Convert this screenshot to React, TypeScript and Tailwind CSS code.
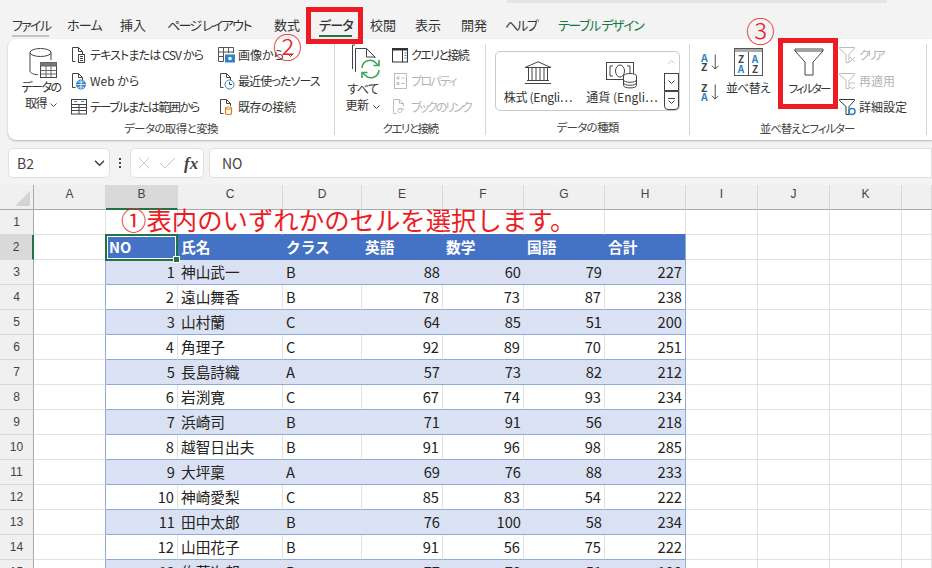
import React from 'react';

const rows = [
  [1, '神山武一', 'B', 88, 60, 79, 227],
  [2, '遠山舞香', 'B', 78, 73, 87, 238],
  [3, '山村蘭', 'C', 64, 85, 51, 200],
  [4, '角理子', 'C', 92, 89, 70, 251],
  [5, '長島詩織', 'A', 57, 73, 82, 212],
  [6, '岩渕寛', 'C', 67, 74, 93, 234],
  [7, '浜崎司', 'B', 71, 91, 56, 218],
  [8, '越智日出夫', 'B', 91, 96, 98, 285],
  [9, '大坪稟', 'A', 69, 76, 88, 233],
  [10, '神崎愛梨', 'C', 85, 83, 54, 222],
  [11, '田中太郎', 'B', 76, 100, 58, 234],
  [12, '山田花子', 'B', 91, 56, 75, 222],
  [13, '佐藤次郎', 'B', 77, 70, 51, 198],
];

const columns = ['A', 'B', 'C', 'D', 'E', 'F', 'G', 'H', 'I', 'J', 'K', ''];
const heads = ['NO', '氏名', 'クラス', '英語', '数学', '国語', '合計'];

const Chevron = ({ className = '' }: { className?: string }) => (
  <svg width="7" height="4" viewBox="0 0 7 4" className={className} fill="none" stroke="#444" strokeWidth="1">
    <path d="M.5.5 3.5 3.5 6.5.5" />
  </svg>
);

const Doc = ({ children, stroke = '#444' }: { children?: React.ReactNode; stroke?: string }) => (
  <svg width="18" height="18" viewBox="0 0 18 18" fill="none" stroke={stroke} strokeWidth="1">
    <path d="M5.5 15.5H2.5V1.5H8.5L12.5 5.5V8M8.5 1.5V5.5H12.5" />
    {children}
  </svg>
);

const DataIcon = () => (
  <svg width="32" height="34" viewBox="0 0 32 34" fill="none" stroke="#444" strokeWidth="1">
    <ellipse cx="11.5" cy="5.5" rx="10.5" ry="4" />
    <path d="M1 5.5V24c0 2 3.5 3.5 8 3.8M22 5.5V13" />
    <rect x="11.5" y="15.5" width="16" height="15" fill="#fff" />
    <rect x="11.5" y="15.5" width="16" height="3.5" fill="#777" stroke="#666" />
    <path d="M11.5 23.5h16M11.5 27h16M17 19v11.5M22 19v11.5" stroke="#666" />
  </svg>
);

const TextIcon = () => (
  <Doc>
    <rect x="8.5" y="8.5" width="6" height="8" fill="#fff" />
    <path d="M10 10.5h3M10 12.5h3M10 14.5h3" />
  </Doc>
);

const WebIcon = () => (
  <Doc>
    <circle cx="11" cy="12.5" r="4.5" fill="#2e83c9" stroke="#2e83c9" />
    <path d="M6.5 12.5h9M11 8v9M8 9.5c2 1 4 1 6 0M8 15.5c2-1 4-1 6 0" stroke="#fff" strokeWidth=".8" />
  </Doc>
);

const TableIcon = () => (
  <svg width="17" height="16" viewBox="0 0 17 16" fill="none" stroke="#444">
    <rect x=".5" y=".5" width="15" height="14.5" />
    <path d="M.5 5.5h15M.5 8.5h15M.5 11.5h15M8 5.5V15" />
    <path d="M3 2.5h3M10 2.5h3" stroke="#2e83c9" />
  </svg>
);

const ImageIcon = () => (
  <svg width="18" height="16" viewBox="0 0 18 16" fill="none" stroke="#555">
    <path d="M5.5 14.5H.5V.5h15V6M.5 5h15M.5 9.5h5M5.5.5v14M10.5.5V6" />
    <rect x="7.5" y="8" width="9" height="7" fill="#2e83c9" stroke="#2e83c9" />
    <circle cx="12" cy="11.5" r="1.8" fill="#fff" stroke="none" />
  </svg>
);

const RecentIcon = () => (
  <Doc>
    <circle cx="11.5" cy="12.5" r="4.5" fill="#fff" stroke="#2e83c9" />
    <path d="M11.5 10v2.5H14" />
  </Doc>
);

const ExistIcon = () => (
  <Doc>
    <path d="M7.5 10.2c0-1.6 6-1.6 6 0v5.3c0 1.3-6 1.3-6 0z" fill="#fff" stroke="#e07b1a" strokeWidth="1.2" />
    <path d="M7.5 10.5c1.5 1 4.5 1 6 0" stroke="#e07b1a" />
  </Doc>
);

const RefreshIcon = () => (
  <svg width="30" height="36" viewBox="0 0 30 36" fill="none" stroke="#444">
    <path d="M1.5 25V1H4M4.5 28V4.5H15.5L24 13V14M15.5 4.5V13H24" />
    <path d="M11 24a8 8 0 0 1 14-5l2 2M28 26a8 8 0 0 1-14 5l-2-2" stroke="#3aa655" strokeWidth="1.6" />
    <path d="M28 16v5.5h-5.5M11 34v-5.5h5.5" stroke="#3aa655" strokeWidth="1.6" />
  </svg>
);

const QueryIcon = () => (
  <svg width="16" height="15" viewBox="0 0 16 15" fill="none" stroke="#333">
    <rect x=".5" y=".5" width="15" height="13.5" strokeWidth="1" />
    <path d="M.5 1.5h15" strokeWidth="2" />
    <path d="M10.5 1v13" />
    <path d="M12.5 5h2M12.5 7.5h2M12.5 10h2" stroke="#2e83c9" />
  </svg>
);

const PropIcon = () => (
  <svg width="13" height="16" viewBox="0 0 13 16" fill="none" stroke="#bbb">
    <rect x=".5" y=".5" width="12" height="15" />
    <path d="M3 4h2v2H3zM3 9.5h2v2H3zM7.5 5h3M7.5 10.5h3" />
  </svg>
);

const LinkIcon = () => (
  <Doc stroke="#bbb">
    <path d="M7 11.5c2-2 4-1 4 1s-3 3-4 1 2-4 6-2" />
  </Doc>
);

const BankIcon = () => (
  <svg width="28" height="24" viewBox="0 0 28 24" fill="none" stroke="#444">
    <path d="M1 6.5 14 .8l13 5.7z" />
    <path d="M4.5 7v12M8 7v12M12 7v12M16 7v12M20 7v12M23.5 7v12M3 19.5h22M1 22.5h26" />
  </svg>
);

const CurrencyIcon = () => (
  <svg width="32" height="27" viewBox="0 0 32 27" fill="none" stroke="#444" className="translate-y-[4px]">
    <rect x=".5" y=".5" width="27" height="17" />
    <path d="M7 4H4v10h3M21 4h3v10h-3" />
    <ellipse cx="14" cy="9" rx="4.5" ry="6" />
    <ellipse cx="24" cy="14" rx="6.5" ry="2.5" fill="#fff" />
    <path d="M17.5 14v9.5c0 3.2 13 3.2 13 0V14M17.5 18c0 3 13 3 13 0M17.5 21c0 3 13 3 13 0" fill="#fff" />
  </svg>
);

const SortIcon = ({ top, bottom }: { top: string; bottom: string }) => (
  <div className="flex items-center w-[18px] h-[20px]">
    <div className="flex flex-col text-[10.5px] leading-[9.5px] font-bold w-[8px]">
      <span className={top === 'A' ? 'text-[#2e83c9]' : 'text-[#444]'}>{top}</span>
      <span className={bottom === 'A' ? 'text-[#2e83c9]' : 'text-[#444]'}>{bottom}</span>
    </div>
    <svg width="9" height="18" viewBox="0 0 9 18" fill="none" stroke="#444" className="ml-[2px]">
      <path d="M4.5 1v15.5M1 13l3.5 3.5L8 13" />
    </svg>
  </div>
);

const SortBigIcon = () => (
  <div className="w-[29px] h-[28px] border border-[#555] flex flex-col">
    <div className="h-[3px] bg-[#aaa]" />
    <div className="flex flex-1 text-[10px] leading-[10px] font-bold text-center">
      <div className="flex-1 border-r border-[#555] flex flex-col justify-center">
        <span className="text-[#444]">Z</span>
        <span className="text-[#2e83c9]">A</span>
      </div>
      <div className="flex-1 flex flex-col justify-center">
        <span className="text-[#2e83c9]">A</span>
        <span className="text-[#444]">Z</span>
      </div>
    </div>
  </div>
);

const FunnelIcon = () => (
  <svg width="30" height="28" viewBox="0 0 30 28" fill="none" stroke="#444">
    <path d="M1 1h28v2L19 14v13h-8V14L1 3z" />
    <path d="M1 3h28" />
  </svg>
);

const SmallFunnel = ({ stroke = '#bbb', children }: { stroke?: string; children?: React.ReactNode }) => (
  <svg width="18" height="17" viewBox="0 0 18 17" fill="none" stroke={stroke}>
    <path d="M.5.5h15v1L10 7.5v8H7v-8L.5 1.5z" />
    {children}
  </svg>
);

const SmallItem = ({ icon, label, muted = false, track = '', after }: { icon: React.ReactNode; label: string; muted?: boolean; track?: string; after?: React.ReactNode }) => (
  <div className={`h-[26px] flex items-center gap-[2px] whitespace-nowrap ${muted ? 'text-[#b4b4b4]' : ''}`}>
    <div className="w-[18px] flex justify-center">{icon}</div>
    <span className={track}>{label}</span>
    {after}
  </div>
);

const Group = ({ label, width, track, children }: { label: string; width: string; track: string; children: React.ReactNode }) => (
  <div className={`${width} h-full flex flex-col border-r border-[#d6d6d6] my-[5px] shrink-0`}>
    <div className="h-[78px] flex">{children}</div>
    <div className={`text-center text-[11.5px] leading-[16px] text-[#444] ${track}`}>{label}</div>
  </div>
);

const tabs = [
  ['ファイル', 'w-[37px] ml-[12px] tracking-[-1.7px]'],
  ['ホーム', 'w-[33px] ml-[18px] tracking-[-0.8px]'],
  ['挿入', 'w-[26px] ml-[20px]'],
  ['ページ レイアウト', 'w-[86px] ml-[21px] tracking-[-1.6px]'],
  ['数式', 'w-[26px] ml-[21px]'],
  ['データ', 'w-[33px] ml-[19px] tracking-[-0.8px]'],
  ['校閲', 'w-[26px] ml-[18px]'],
  ['表示', 'w-[26px] ml-[19px]'],
  ['開発', 'w-[26px] ml-[20px]'],
  ['ヘルプ', 'w-[32px] ml-[18px] tracking-[-1.8px]'],
  ['テーブル デザイン', 'w-[88px] ml-[21px] tracking-[-1.4px]'],
];

export default function App() {
  return (
    <div className="relative w-[932px] h-[568px] overflow-hidden bg-[#f3f3f3] text-[#333] font-['Noto_Sans_CJK_JP','Noto_Sans',sans-serif] [font-feature-settings:'palt']">
      <div className="h-[3px] ml-[507px] mr-[45px] bg-[#e4e4e4]" />

      {/* tabs */}
      <div className="h-[36px] flex items-start pt-[13px] text-[13px] leading-[18px] whitespace-nowrap">
        {tabs.map(([label, cls], i) => (
          <div key={label} className={`${cls} relative ${i === 10 ? 'text-[#107c41]' : ''} ${i === 5 ? 'font-medium' : ''}`}>
            {label}
            {i === 0 && <div className="absolute left-0 right-0 top-[19px] h-[2px] bg-[#c4c4c4]" />}
            {i === 5 && <div className="absolute left-0 right-0 top-[19px] h-[2px] bg-[#217346]" />}
          </div>
        ))}
      </div>

      {/* ribbon */}
      <div className="ml-[8px] h-[101px] flex bg-white rounded-l-[8px] shadow-[0_1px_2px_rgba(0,0,0,0.25)] text-[12px] leading-[16px] pb-[10px]">
        <Group label="データの取得と変換" width="w-[327px]" track="tracking-[-0.6px]">
          <div className="w-[62px] pl-[4px] flex flex-col items-center pt-[3px]">
            <div className="ml-[8px]"><DataIcon /></div>
            <div className="text-center leading-[16px] tracking-[-1.5px] -mt-[2px]">データの<br />取得 <Chevron className="inline ml-[3px]" /></div>
          </div>
          <div className="w-[148px] -mt-[2px]">
            <SmallItem icon={<TextIcon />} label="テキストまたは CSV から" track="tracking-[-0.85px]" />
            <SmallItem icon={<WebIcon />} label="Web から" />
            <SmallItem icon={<TableIcon />} label="テーブルまたは範囲から" track="tracking-[-1.4px]" />
          </div>
          <div className="-mt-[2px]">
            <SmallItem icon={<ImageIcon />} label="画像から" after={<Chevron className="ml-[1px]" />} />
            <SmallItem icon={<RecentIcon />} label="最近使ったソース" track="tracking-[-0.9px]" />
            <SmallItem icon={<ExistIcon />} label="既存の接続" track="tracking-[-0.4px]" />
          </div>
        </Group>
        <Group label="クエリと接続" width="w-[151px]" track="tracking-[-1.5px]">
          <div className="w-[56px] flex flex-col items-center">
            <div className="ml-[6px]"><RefreshIcon /></div>
            <div className="text-center leading-[16px] mt-[1px] tracking-[-0.6px]">すべて<br />更新 <Chevron className="inline ml-[3px]" /></div>
          </div>
          <div className="-mt-[2px]">
            <SmallItem icon={<QueryIcon />} label="クエリと接続" track="tracking-[-1.6px]" />
            <SmallItem icon={<PropIcon />} label="プロパティ" muted track="tracking-[-1.7px]" />
            <SmallItem icon={<LinkIcon />} label="ブックのリンク" muted track="tracking-[-2px]" />
          </div>
        </Group>
        <Group label="データの種類" width="w-[204px]" track="tracking-[-0.7px]">
          <div className="ml-[9px] mt-[7px] w-[185px] h-[60px] border border-[#c8c8c8] rounded-[5px] flex">
            <div className="w-[84px] flex flex-col items-center pt-[6px]">
              <div className="h-[27px] flex items-end"><BankIcon /></div>
              <span className="whitespace-nowrap mt-[4px] tracking-[-0.3px]">株式 (Engli⋯</span>
            </div>
            <div className="w-[84px] flex flex-col items-center pt-[6px]">
              <div className="h-[27px] flex items-end"><CurrencyIcon /></div>
              <span className="whitespace-nowrap mt-[4px]">通貨 (Engli⋯</span>
            </div>
            <div className="flex-1 flex flex-col items-center">
              <div className="w-[15px] h-[21px] flex items-center justify-center"><Chevron className="rotate-180 opacity-30" /></div>
              <div className="w-[15px] h-[19px] border border-[#444] flex items-center justify-center"><Chevron /></div>
              <div className="w-[15px] h-[19px] border border-[#444] rounded-b-[4px] flex flex-col items-center justify-center gap-[1px]">
                <div className="w-[7px] h-px bg-[#444]" />
                <Chevron />
              </div>
            </div>
          </div>
        </Group>
        <div className="w-[237px] h-full flex flex-col my-[5px] border-r border-[#d6d6d6]">
          <div className="h-[78px] flex">
            <div className="w-[36px] pl-[11px] pt-[8px] flex flex-col gap-[10px]">
              <SortIcon top="A" bottom="Z" />
              <SortIcon top="Z" bottom="A" />
            </div>
            <div className="w-[44px] flex flex-col items-center pt-[4px] gap-[4px]">
              <SortBigIcon />
              <span className="whitespace-nowrap tracking-[-0.75px]">並べ替え</span>
            </div>
            <div className="w-[68px] ml-[5px] flex flex-col items-center pt-[4px] gap-[4px]">
              <FunnelIcon />
              <span className="whitespace-nowrap text-[11.5px] tracking-[-1.8px]">フィルター</span>
            </div>
            <div className="-mt-[2px] ml-[-4px]">
              <SmallItem muted track="tracking-[-2.6px]" icon={<SmallFunnel><path d="M11 10l5 5M16 10l-5 5" /></SmallFunnel>} label="クリア" />
              <SmallItem muted icon={<SmallFunnel><path d="M11 11a3 3 0 0 1 5 0M16 14a3 3 0 0 1-5 0" /></SmallFunnel>} label="再適用" />
              <SmallItem icon={<SmallFunnel stroke="#333"><circle cx="13" cy="12.5" r="3" stroke="#2e83c9" strokeWidth="1.5" /></SmallFunnel>} label="詳細設定" />
            </div>
          </div>
          <div className="w-[234px] text-center text-[11.5px] leading-[16px] text-[#444] tracking-[-1.1px]">並べ替えとフィルター</div>
        </div>
      </div>

      {/* formula bar */}
      <div className="mt-[8px] h-[30px] flex text-[#444]">
        <div className="ml-[8px] w-[102px] bg-white border border-[#e0e0e0] rounded-[5px] flex items-center justify-between pl-[8px] pr-[4px] text-[14px]">
          <span>B2</span>
          <Chevron className="scale-150 mr-[2px]" />
        </div>
        <div className="w-[20px] flex flex-col items-center justify-center gap-[2px]">
          <div className="w-[2px] h-[2px] bg-[#444]" />
          <div className="w-[2px] h-[2px] bg-[#444]" />
          <div className="w-[2px] h-[2px] bg-[#444]" />
        </div>
        <div className="w-[74px] bg-white border border-[#e0e0e0] rounded-[5px] flex items-center pl-[7px] gap-[9px]">
          <svg width="12" height="12" viewBox="0 0 12 12" stroke="#c4c4c4" fill="none"><path d="M.5.5l11 11M11.5.5l-11 11" /></svg>
          <svg width="17" height="12" viewBox="0 0 17 12" stroke="#c4c4c4" fill="none"><path d="M1 6l5 5L16 1" /></svg>
          <span className="font-['Liberation_Serif',serif] italic font-bold text-[17px] leading-none -ml-[1px]">fx</span>
        </div>
        <div className="ml-[5px] flex-1 bg-white border border-[#e0e0e0] rounded-l-[5px] flex items-center pl-[12px] text-[14px]">NO</div>
      </div>

      {/* sheet */}
      <div className="mt-[7px] relative bg-white grid grid-cols-[34px_72px_72px_105px_79px_81px_81px_81px_81px_72px_72px_72px_30px] auto-rows-[25px] text-[14.67px] leading-[24px] [font-feature-settings:normal]">
        <div className="bg-[#f0f0f0] border-r border-b border-[#a8a8a8] relative overflow-hidden">
          <div className="absolute right-[3px] bottom-[3px] w-0 h-0 border-l-[15px] border-l-transparent border-b-[15px] border-b-[#d4d4d4]" />
        </div>
        {columns.map((c) => (
          <div key={c} className={`text-center text-[12px] leading-[18px] text-[#444] font-['Liberation_Sans',sans-serif] border-r border-r-[#d8d8d8] border-b ${c === 'B' ? 'bg-[#d9d9d9] border-b-2 border-b-[#217346]' : 'bg-[#f0f0f0] border-b-[#a8a8a8]'}`}>
            {c}
          </div>
        ))}

        {/* row 1 */}
        <RowHead n={1} />
        {columns.map((c, i) => (
          <div key={c} className={`border-r border-[#e1e1e1] border-b ${i >= 1 && i <= 7 ? 'border-b-[#4472c4]' : ''}`} />
        ))}

        {/* row 2 */}
        <RowHead n={2} active />
        <div className="border-r border-b border-[#e1e1e1]" />
        {heads.map((h, i) => (
          <div key={h} className={`bg-[#4472c4] text-white font-bold pl-[3px] relative ${i === 6 ? 'border-r border-[#8ea9db]' : ''} leading-[24px]`}>
            {h}
            {i === 0 && (
              <div className="absolute left-[-1px] top-[-1px] w-[73px] h-[27px] border-2 border-[#217346] z-10">
                <div className="absolute inset-0 border border-white" />
                <div className="absolute right-[-4px] bottom-[-4px] w-[7px] h-[7px] bg-[#217346] border border-white" />
              </div>
            )}
          </div>
        ))}
        {['I', 'J', 'K', 'L'].map((c) => (
          <div key={c} className="border-r border-b border-[#e1e1e1]" />
        ))}

        {/* table body */}
        {rows.map((r, ri) => {
          const band = ri % 2 === 0;
          return (
            <React.Fragment key={ri}>
              <RowHead n={ri + 3} />
              <div className="border-r border-r-[#8ea9db] border-b border-b-[#e1e1e1]" />
              {r.map((v, ci) => {
                const right = typeof v === 'number';
                const cellCls = band ? 'bg-[#d9e1f2]' : `bg-white ${ci === 6 ? '' : 'border-r border-r-[#e1e1e1]'}`;
                return (
                  <div
                    key={ci}
                    className={`${cellCls} border-b border-b-[#8ea9db] whitespace-nowrap overflow-hidden ${right ? 'text-right pr-[3px]' : 'pl-[3px]'} ${ci === 6 ? 'border-r border-r-[#8ea9db]' : ''} text-[#222]`}
                  >
                    {v}
                  </div>
                );
              })}
              {['I', 'J', 'K', 'L'].map((c) => (
                <div key={c} className="border-r border-b border-[#e1e1e1]" />
              ))}
            </React.Fragment>
          );
        })}
      </div>

      {/* annotations */}
      <div className="absolute left-[121px] top-[202px] text-[25.4px] leading-[34px] text-[#ed1c24] font-normal whitespace-nowrap [font-feature-settings:normal]">
        ①表内のいずれかのセルを選択します。
      </div>
      <div className="absolute left-[273px] top-[26px] text-[29px] leading-[40px] text-[#ed1c24] font-light">②</div>
      <div className="absolute left-[746px] top-[10px] text-[29px] leading-[40px] text-[#ed1c24] font-light">③</div>
      <div className="absolute left-[306px] top-[7px] w-[57px] h-[37px] border-[5px] border-[#ed1c24]" />
      <div className="absolute left-[778px] top-[38px] w-[60px] h-[71px] border-[5px] border-[#ed1c24]" />
    </div>
  );
}

function RowHead({ n, active = false }: { n: number; active?: boolean }) {
  return (
    <div
      className={`text-center text-[12px] leading-[24px] text-[#444] font-['Liberation_Sans',sans-serif] border-b border-b-[#d8d8d8] ${active ? 'bg-[#d9d9d9] border-r-2 border-r-[#217346]' : 'bg-[#f0f0f0] border-r border-r-[#a8a8a8]'}`}
    >
      {n}
    </div>
  );
}
